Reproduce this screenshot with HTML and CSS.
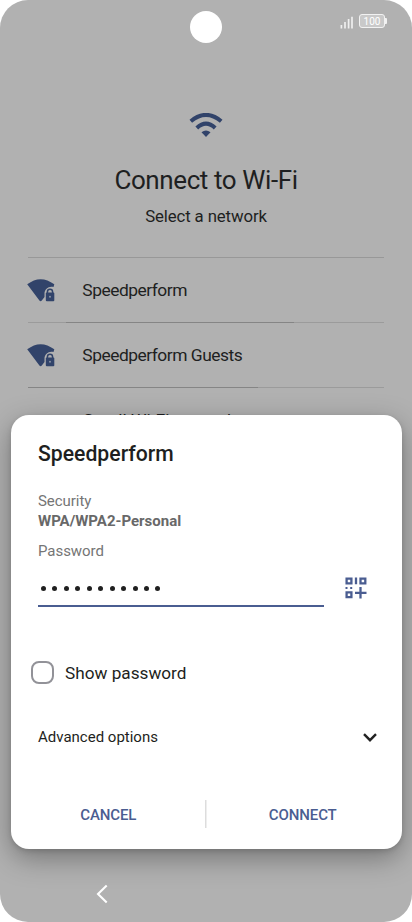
FILE: index.html
```html
<!DOCTYPE html>
<html lang="en">
<head>
<meta charset="utf-8">
<meta name="viewport" content="width=device-width, initial-scale=1">
<title>Connect to Wi-Fi</title>
<link rel="stylesheet" href="styles.css">
</head>
<body>
<div class="phone">
  <header class="status">
    <span class="camera"></span>
    <svg class="signal" width="14" height="13" viewBox="0 0 14 13"><path d="M1.4 9v3.5M5 6v6.5M8.6 3v9.5M12 .8v11.7" stroke="#efefef" stroke-width="1.7"/></svg>
    <span class="battery">100</span>
  </header>
  <main class="setup">
    <svg class="wifi" width="34" height="25" viewBox="0 0 34 25"><g fill="none" stroke="#31436a" stroke-width="4"><path d="M1.8 8.2Q17-4.4 32.2 8.2"/><path d="M7.8 15Q17 6.2 26.2 15"/></g><path d="M12.5 19.3Q17 15.7 21.5 19.3L17 24Z" fill="#31436a"/></svg>
    <h1>Connect to Wi-Fi</h1>
    <p class="subtitle">Select a network</p>
    <ul class="networks">
      <li>
        <svg width="28" height="24" viewBox="0 0 28 24"><path d="M.2 5.3Q13.5-5 27.3 5.3L26.5 8C22 6.5 17.5 10 17.5 14.5V18L14.8 21.5Q13.6 23 12.4 21.5Z" fill="#31436a"/><path d="M20.4 14v-1.1a2.6 2.6 0 0 1 5.2 0V14" fill="none" stroke="#31436a" stroke-width="1.5"/><rect x="18.8" y="13.6" width="8.5" height="8.7" rx="1" fill="#31436a"/><circle cx="23" cy="17.8" r="1" fill="#8a92a3"/></svg>
        <span>Speedperform</span>
      </li>
      <li class="first-rule">
        <svg width="28" height="24" viewBox="0 0 28 24"><path d="M.2 5.3Q13.5-5 27.3 5.3L26.5 8C22 6.5 17.5 10 17.5 14.5V18L14.8 21.5Q13.6 23 12.4 21.5Z" fill="#31436a"/><path d="M20.4 14v-1.1a2.6 2.6 0 0 1 5.2 0V14" fill="none" stroke="#31436a" stroke-width="1.5"/><rect x="18.8" y="13.6" width="8.5" height="8.7" rx="1" fill="#31436a"/><circle cx="23" cy="17.8" r="1" fill="#8a92a3"/></svg>
        <span>Speedperform Guests</span>
      </li>
      <li class="second-rule"><i></i><span class="covered">Small Wi-Fi network</span></li>
    </ul>
  </main>
  <section class="dialog">
    <h2>Speedperform</h2>
    <div class="label security">Security</div>
    <div class="value">WPA/WPA2-Personal</div>
    <div class="label password">Password</div>
    <div class="entry">
      <div class="field"><i></i><i></i><i></i><i></i><i></i><i></i><i></i><i></i><i></i><i></i><i></i></div>
      <svg width="22" height="22" viewBox="0 0 22 22"><g fill="none" stroke="#4a5d91" stroke-width="2.3"><path d="M1.6 1.6h4.8v4.8H1.6zM15.5 1.6h4.8v4.8h-4.8zM1.6 15.3h4.8v4.8H1.6zM11 .4v6.8M15.5 10v11.6M10 15.8h11.5"/></g><path d="M.5 10h2v2h-2zM5.2 10h2v2h-2z" fill="#4a5d91"/></svg>
    </div>
    <div class="show"><span class="box"></span><span class="show-text">Show password</span></div>
    <div class="advanced"><span>Advanced options</span><svg width="14" height="9" viewBox="0 0 14 9"><path d="M1 1.2 7 7.2 13 1.2" fill="none" stroke="#222" stroke-width="2.4"/></svg></div>
    <div class="actions"><span class="cancel">CANCEL</span><span class="connect">CONNECT</span></div>
  </section>
  <nav class="nav"><svg width="12" height="20" viewBox="0 0 12 20"><path d="M10.7 1.5 2 10l8.7 8.5" fill="none" stroke="#fff" stroke-width="2.1"/></svg></nav>
</div>
</body>
</html>
```
FILE: styles.css
```css
* { box-sizing: border-box; }
body { margin: 0; background: #fff; font-family: Roboto, "Liberation Sans", sans-serif; color: #1e1f21; }
h1, h2, p, ul { margin: 0; padding: 0; font-weight: 400; }
svg { display: block; flex: none; }
.phone { position: relative; display: flex; flex-direction: column; width: 412px; height: 922px; overflow: hidden; border-radius: 28px; background: #b1b1b1; }
.status { position: relative; display: flex; justify-content: flex-end; align-items: flex-start; height: 60px; padding: 14px 27px 0 0; }
.camera { position: absolute; left: 190px; top: 11px; width: 32px; height: 32px; border-radius: 50%; background: #fff; }
.signal { margin: 2px 5px 0 0; }
.battery { position: relative; width: 26px; height: 14px; border: 1.5px solid #f2f2f2; border-radius: 3px; background: #c9c9c9; color: #fff; font-size: 10px; line-height: 13px; text-align: center; }
.battery::after { content: ""; position: absolute; right: -3px; top: 3px; width: 2px; height: 6px; border-radius: 0 1px 1px 0; background: #f2f2f2; }
.setup { display: flex; flex-direction: column; align-items: center; height: 360px; padding-top: 53px; overflow: hidden; }
h1 { margin-top: 26px; font-size: 26px; line-height: 32px; letter-spacing: -.4px; white-space: nowrap; }
.subtitle { margin-top: 10px; font-size: 16.8px; line-height: 20px; letter-spacing: -.12px; }
.networks { width: 356px; margin-top: 31px; list-style: none; }
.networks li { display: grid; grid-template-columns: 54.3px 1fr; align-items: center; height: 65.2px; border-top: 1px solid #989898; font-size: 17.4px; letter-spacing: -.48px; white-space: nowrap; }
.networks svg { margin: 2px 0 0 -.8px; }
.networks .first-rule { border-image: linear-gradient(90deg, #9b9b9b 39px, #858585 39px 266px, #9b9b9b 266px) 1; }
.networks .second-rule { border-image: linear-gradient(90deg, #858585 230px, #9b9b9b 230px) 1; }
.covered { padding: 0 0 0 1px; letter-spacing: 0; }
.dialog { position: absolute; left: 10.5px; top: 415px; width: 391px; height: 434px; padding: 26px 24.5px 0 27.5px; border-radius: 18px; background: #fff; box-shadow: 0 9px 28px rgba(0,0,0,.34), 0 2px 5px rgba(0,0,0,.13); }
h2 { height: 26px; font-size: 21.2px; line-height: 26px; font-weight: 500; }
.label { color: #757575; font-size: 15px; line-height: 20px; letter-spacing: -.05px; }
.security { margin-top: 24px; }
.value { color: #686868; font-size: 15px; font-weight: 700; line-height: 20px; }
.password { margin-top: 10px; }
.entry { display: flex; justify-content: space-between; width: 329px; height: 46px; padding-top: 16px; }
.field { display: flex; gap: 6.44px; width: 286px; height: 30px; padding: 8.5px 0 0 3px; border-bottom: 2px solid #4a5d91; }
.field i { width: 5px; height: 5px; border-radius: 50%; background: #202020; }
.show { display: flex; align-items: center; height: 24px; margin: 53px 0 0 -7px; }
.box { width: 23px; height: 23px; margin-right: 11px; border: 2px solid #929298; border-radius: 8px; }
.show-text { padding-top: 2px; font-size: 17.2px; }
.advanced { display: flex; align-items: center; justify-content: space-between; height: 20px; margin-top: 43px; padding-right: .5px; font-size: 15px; }
.actions { display: grid; grid-template-columns: 1fr 1fr; align-items: center; height: 28px; margin: 53px -24.5px 0 -27.5px; background: linear-gradient(#ddd, #ddd) center / 1.5px 28px no-repeat; color: #4a5d91; font-size: 15px; font-weight: 500; letter-spacing: -.12px; text-align: center; }
.cancel, .connect { padding-top: 2px; }
.connect { padding-right: 2px; }
.nav { margin-top: auto; height: 38px; padding-left: 96px; }
```
